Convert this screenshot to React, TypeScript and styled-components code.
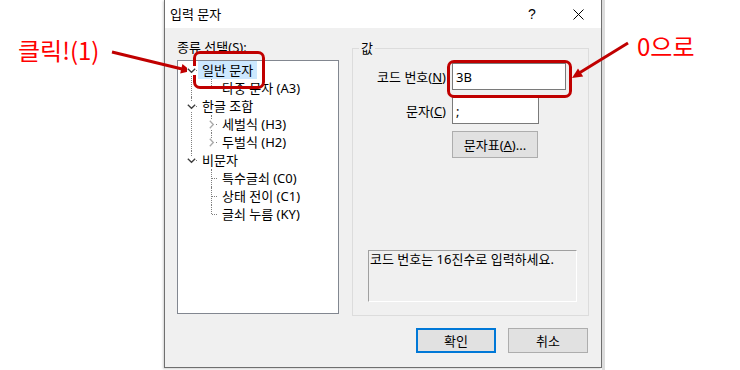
import React from 'react';
import styled, { createGlobalStyle } from 'styled-components';

interface TreeItem {
  label: string;
  expanded?: boolean;
  selected?: boolean;
  collapsed?: boolean;
  children?: TreeItem[];
}

const tree: TreeItem[] = [
  { label: '일반 문자', expanded: true, selected: true, children: [{ label: '다중 문자 (A3)' }] },
  {
    label: '한글 조합',
    expanded: true,
    children: [
      { label: '세벌식 (H3)', collapsed: true },
      { label: '두벌식 (H2)', collapsed: true },
    ],
  },
  {
    label: '비문자',
    expanded: true,
    children: [{ label: '특수글쇠 (C0)' }, { label: '상태 전이 (C1)' }, { label: '글쇠 누름 (KY)' }],
  },
];

function TreeNodes({ items, root }: { items: TreeItem[]; root?: boolean }) {
  return (
    <TreeList>
      {items.map((item, i) => (
        <Node key={item.label} $last={i === items.length - 1} $first={!!root && i === 0}>
          {(item.expanded || item.collapsed) && (
            <Expander>
              <svg width="9" height="9" viewBox="0 0 9 9">
                {item.expanded ? (
                  <path d="M0.8 2.8 L4.5 6.3 L8.2 2.8" fill="none" stroke="#3c3c3c" strokeWidth="1.3" />
                ) : (
                  <path d="M2.8 0.8 L6.3 4.5 L2.8 8.2" fill="none" stroke="#a8a8a8" strokeWidth="1.3" />
                )}
              </svg>
            </Expander>
          )}
          <Row>
            <Label $selected={!!item.selected}>{item.label}</Label>
          </Row>
          {item.expanded && item.children && <TreeNodes items={item.children} />}
        </Node>
      ))}
    </TreeList>
  );
}

export default function App() {
  return (
    <>
      <GlobalStyle />
      <Stage>
        <Dialog>
          <TitleBar>
            <Title>입력 문자</Title>
            <CaptionButton>?</CaptionButton>
            <CaptionButton>
              <svg width="11" height="11" viewBox="0 0 11 11">
                <path d="M0.5 0.5 L10.5 10.5 M10.5 0.5 L0.5 10.5" stroke="#000" strokeWidth="1" />
              </svg>
            </CaptionButton>
          </TitleBar>

          <Body>
            <LeftColumn>
              <FieldLabel>
                종류 선택(<u>S</u>):
              </FieldLabel>
              <TreeBox>
                <TreeNodes items={tree} root />
              </TreeBox>
            </LeftColumn>

            <GroupBox>
              <Legend>값</Legend>
              <Fields>
                <RowLabel>
                  코드 번호(<u>N</u>)
                </RowLabel>
                <TextInput readOnly defaultValue="3B" $width={114} />
                <RowLabel>
                  문자(<u>C</u>)
                </RowLabel>
                <TextInput readOnly defaultValue=";" $width={87} />
                <span />
                <DialogButton $width={86} $height={27}>
                  문자표(<u>A</u>)...
                </DialogButton>
              </Fields>
              <HintBox>코드 번호는 16진수로 입력하세요.</HintBox>
            </GroupBox>
          </Body>

          <Footer>
            <DialogButton $width={80} $height={25} $primary>
              확인
            </DialogButton>
            <DialogButton $width={80} $height={25}>
              취소
            </DialogButton>
          </Footer>
        </Dialog>
        <BackdropEdge />

        {/* 설명용 표시 */}
        <Note style={{ left: 18, top: 36 }}>클릭!(1)</Note>
        <Note style={{ left: 637, top: 32 }}>0으로</Note>
        <Highlight style={{ left: 193, top: 51, width: 72, height: 38 }} />
        <Highlight style={{ left: 447, top: 60, width: 125, height: 38 }} />
        <Arrows width="740" height="370" viewBox="0 0 740 370">
          <line x1="112" y1="52" x2="182" y2="69" stroke="#c00000" strokeWidth="3" />
          <polygon points="191,71 180.2,73.4 182.4,64" fill="#c00000" />
          <line x1="628" y1="43" x2="580" y2="72.5" stroke="#c00000" strokeWidth="3" />
          <polygon points="572,78 578,68.6 583.2,76.6" fill="#c00000" />
        </Arrows>
      </Stage>
    </>
  );
}

const uiFont = `"Noto Sans", "Noto Sans CJK KR", sans-serif`;

const GlobalStyle = createGlobalStyle`
  html, body {
    margin: 0;
    padding: 0;
    background: #fff;
  }
  body {
    font-family: ${uiFont};
    font-size: 13px;
    color: #000;
  }
  * {
    box-sizing: border-box;
  }
`;

const Stage = styled.div`
  position: relative;
  width: 740px;
  height: 370px;
  overflow: hidden;
  display: flex;
  align-items: flex-start;
  padding-left: 164px;
`;

const Dialog = styled.div`
  width: 438px;
  height: 368px;
  background: #f0f0f0;
  border: 1px solid #6f6f6f;
  border-top: none;
  box-shadow: -1px 1px 2px rgba(0, 0, 0, 0.18);
  display: flex;
  flex-direction: column;
`;

const BackdropEdge = styled.div`
  width: 3px;
  height: 370px;
  background: #dcdcdc;
`;

const TitleBar = styled.div`
  height: 28px;
  background: #fff;
  display: flex;
  align-items: center;
  padding-left: 5px;
`;

const Title = styled.div`
  flex: 1;
  line-height: 16px;
`;

const CaptionButton = styled.div`
  width: 46px;
  height: 28px;
  display: flex;
  align-items: center;
  justify-content: center;
  font-size: 14px;
  font-family: "Liberation Sans", sans-serif;
`;

const Body = styled.div`
  display: flex;
  gap: 13px;
  padding: 11px 12px 0 12px;
`;

const LeftColumn = styled.div`
  width: 162px;
  display: flex;
  flex-direction: column;
  gap: 5px;
`;

const FieldLabel = styled.div`
  line-height: 16px;
  height: 16px;
`;

const TreeBox = styled.div`
  height: 254px;
  background: #fff;
  border: 1px solid #828790;
`;

const TreeList = styled.ul`
  list-style: none;
  margin: 0;
  padding: 0;
`;

const Node = styled.li<{ $last: boolean; $first: boolean }>`
  position: relative;
  padding-left: 20px;

  &::before {
    content: '';
    position: absolute;
    left: 13px;
    top: ${(p) => (p.$first ? 9 : 0)}px;
    ${(p) => (p.$last ? 'height: 9px;' : 'bottom: 0;')}
    border-left: 1px dotted #808080;
  }
`;

const Expander = styled.span`
  position: absolute;
  left: 9px;
  top: 5px;
  width: 9px;
  height: 9px;
  background: #fff;
  display: flex;
  z-index: 1;
`;

const Row = styled.div`
  position: relative;
  height: 18px;
  display: flex;
  align-items: center;

  &::before {
    content: '';
    position: absolute;
    left: -6px;
    top: 9px;
    width: 5px;
    border-top: 1px dotted #808080;
  }
`;

const Label = styled.span<{ $selected: boolean }>`
  height: 18px;
  line-height: 18px;
  padding: 0 4px;
  white-space: nowrap;
  background: ${(p) => (p.$selected ? '#cce8ff' : 'transparent')};
`;

const GroupBox = styled.fieldset`
  margin: 1px 0 0 0;
  padding: 0 0 13px 0;
  width: 237px;
  height: 276px;
  border: 1px solid #dcdcdc;
  display: flex;
  flex-direction: column;
`;

const Legend = styled.legend`
  margin-left: 6px;
  padding: 0 2px;
  line-height: 16px;
`;

const Fields = styled.div`
  display: grid;
  grid-template-columns: 93px auto;
  column-gap: 6px;
  row-gap: 7px;
  align-items: center;
  justify-items: start;
  padding-top: 7px;
`;

const RowLabel = styled.div`
  justify-self: end;
  line-height: 16px;
  white-space: nowrap;
`;

const TextInput = styled.input<{ $width: number }>`
  width: ${(p) => p.$width}px;
  height: 27px;
  border: 1px solid #7a7a7a;
  background: #fff;
  padding: 0 3px;
  font-family: ${uiFont};
  font-size: 13px;
  color: #000;
  outline: none;
`;

const DialogButton = styled.button<{ $width: number; $height: number; $primary?: boolean }>`
  width: ${(p) => p.$width}px;
  height: ${(p) => p.$height}px;
  background: #e1e1e1;
  border: ${(p) => (p.$primary ? '2px solid #0078d7' : '1px solid #adadad')};
  font-family: ${uiFont};
  font-size: 13px;
  color: #000;
  padding: 0;
`;

const HintBox = styled.div`
  margin: auto 11px 0 15px;
  height: 52px;
  border-top: 1px solid #a0a0a0;
  border-left: 1px solid #a0a0a0;
  border-right: 1px solid #fff;
  border-bottom: 1px solid #fff;
  padding: 0 1px;
  line-height: 16px;
  white-space: nowrap;
`;

const Footer = styled.div`
  display: flex;
  justify-content: flex-end;
  gap: 12px;
  padding: 12px 13px 0 0;
`;

const Note = styled.div`
  position: absolute;
  color: #ff0000;
  font-family: "Noto Sans CJK KR", sans-serif;
  font-size: 24px;
  line-height: 28px;
  white-space: nowrap;
`;

const Highlight = styled.div`
  position: absolute;
  border: 3px solid #c00000;
  border-radius: 7px;
`;

const Arrows = styled.svg`
  position: absolute;
  left: 0;
  top: 0;
  pointer-events: none;
`;
